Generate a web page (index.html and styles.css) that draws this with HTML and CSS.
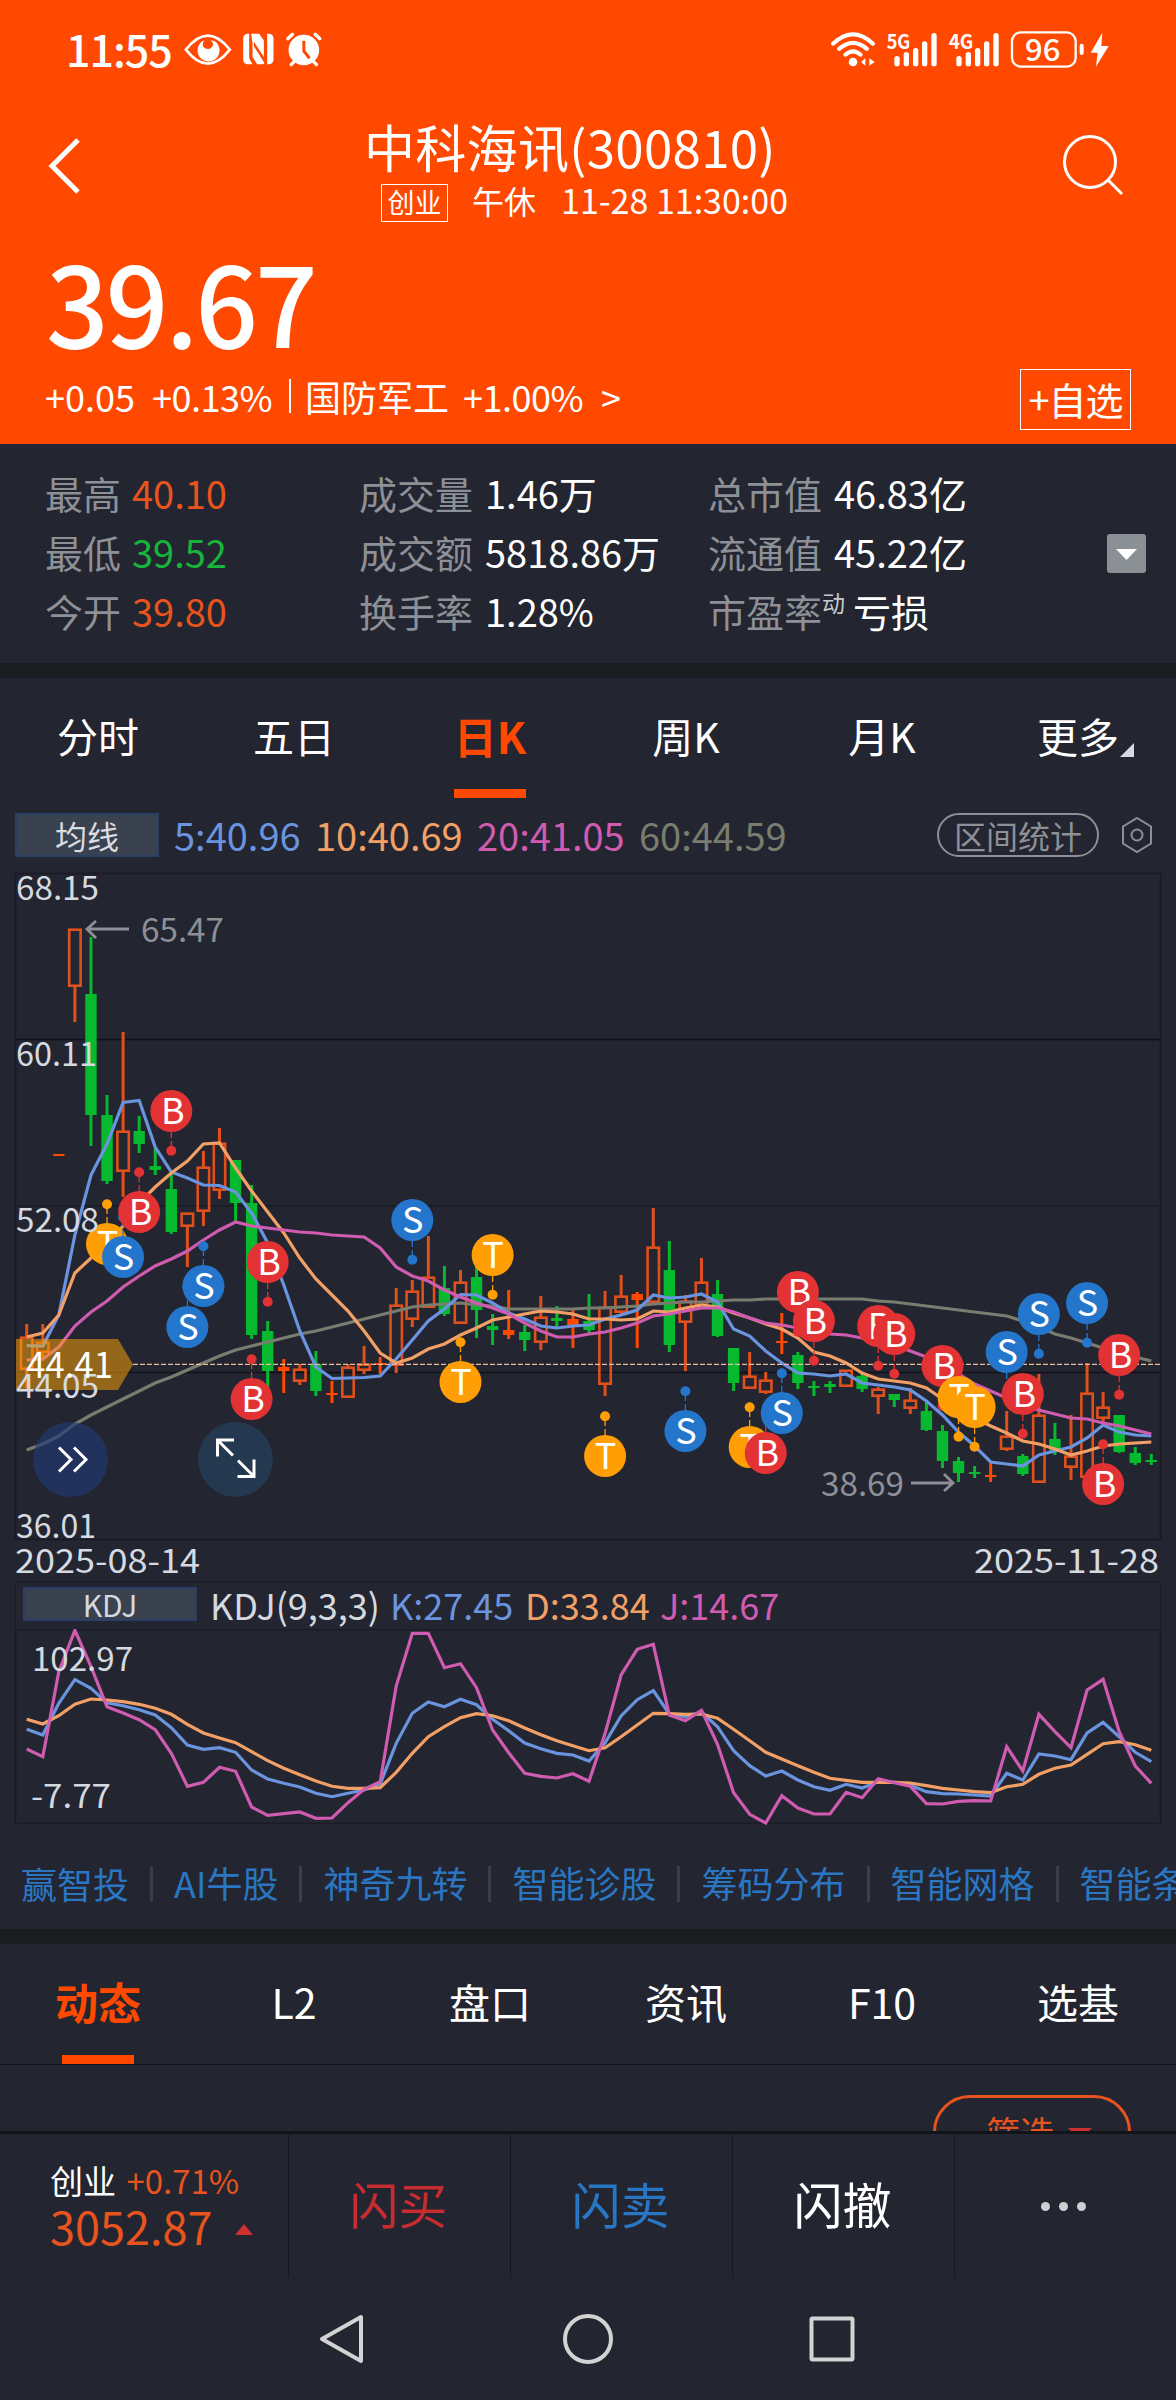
FILE: index.html
```html
<!DOCTYPE html>
<html lang="zh-CN">
<head>
    <meta charset="UTF-8">
    <meta name="viewport" content="width=device-width, initial-scale=1.0">
    <title>中科海讯(300810)</title>
    <link rel="stylesheet" href="styles.css">
</head>
<body>
    <div class="app">
        <header class="header">
            <div class="status-bar">
                <span class="clock">11:55</span>
                <svg class="status-left" viewBox="400 0 440 180">
                    <path d="M408 89 Q474 5 540 89 Q474 173 408 89Z" fill="none" stroke="#fff" stroke-width="8"/>
                    <path d="M465 60 A33 33 0 1 0 505 75 Q499 62 482 61 Q496 72 484 84 Q472 92 460 80 Q456 68 465 60Z" fill="#fff"/>
                    <path d="M594 41h4v74l10 18h-14a14 14 0 0 1-14-14V55a14 14 0 0 1 14-14z" fill="#fff"/>
                    <path d="M604 41h24l14 20v50l-30-46v14l32 50-4 4h-18l-14-22V70zM652 41h5a14 14 0 0 1 14 14v64a14 14 0 0 1-14 14h-5z" fill="#fff"/>
                    <circle cx="762" cy="90" r="46" fill="#fff"/>
                    <path d="M714 56l14-13M810 56l-14-13M724 134l12-12M800 134l-12-12" stroke="#fff" stroke-width="10" stroke-linecap="round"/>
                    <path d="M762 62v31l17 22" fill="none" stroke="#ff4800" stroke-width="9"/>
                </svg>
                <svg class="status-right" viewBox="0 0 900 180">
                    <g fill="none" stroke="#fff" stroke-width="12" stroke-linecap="round">
                        <path d="M39 71Q99 15 159 71M57 87Q99 50 141 87M76 104Q99 84 122 104"/>
                    </g>
                    <circle cx="99" cy="126" r="13" fill="#fff"/>
                    <path d="M136 115v22l-13-11zM148 115v22l16-11z" fill="#fff"/>
                    <text class="net" x="200" y="86" textLength="71" lengthAdjust="spacingAndGlyphs">5G</text>
                    <text class="net" x="386" y="86" textLength="74" lengthAdjust="spacingAndGlyphs">4G</text>
                    <g stroke="#fff" stroke-width="16" stroke-linecap="round">
                        <path d="M231 116v15M259 104v27M287 92v39M314 72v59M342 47v84"/>
                        <path d="M417 116v15M445 104v27M473 92v39M500 72v59M528 47v84"/>
                    </g>
                    <rect x="576" y="37" width="191" height="103" rx="27" fill="none" stroke="#fff" stroke-width="7"/>
                    <text class="battery" x="615" y="122" textLength="106" lengthAdjust="spacingAndGlyphs">96</text>
                    <path d="M785 77v22" stroke="#fff" stroke-width="12" stroke-linecap="round"/>
                    <path d="M847 38l-35 60h21l-5 42 38-62h-22z" fill="#fff"/>
                </svg>
            </div>
            <div class="title-bar">
                <svg class="back" viewBox="0 0 36 60"><path d="M32 4L6 30l26 26" fill="none" stroke="#fff" stroke-width="5"/></svg>
                <div class="title-box">
                    <h1>中科海讯(300810)</h1>
                    <p class="sub"><span class="tag">创业</span><span class="state">午休</span><span>11-28 11:30:00</span></p>
                </div>
                <svg class="search" viewBox="0 0 64 64"><circle cx="29" cy="29" r="25.5" fill="none" stroke="#fff" stroke-width="3"/><path d="M47 47l14 14" stroke="#fff" stroke-width="3"/></svg>
            </div>
            <div class="price">39.67</div>
            <div class="change">
                <span class="c1">+0.05</span><span class="c2">+0.13%</span><span class="bar"></span><span class="c3">国防军工</span><span class="c4">+1.00%</span><span>&gt;</span>
                <button class="add">+自选</button>
            </div>
        </header>

        <section class="stats">
            <dl>
                <div><dt>最高</dt><dd class="up">40.10</dd></div>
                <div><dt>最低</dt><dd class="down">39.52</dd></div>
                <div><dt>今开</dt><dd class="up">39.80</dd></div>
            </dl>
            <dl>
                <div><dt>成交量</dt><dd>1.46万</dd></div>
                <div><dt>成交额</dt><dd>5818.86万</dd></div>
                <div><dt>换手率</dt><dd>1.28%</dd></div>
            </dl>
            <dl>
                <div><dt>总市值</dt><dd>46.83亿</dd></div>
                <div><dt>流通值</dt><dd>45.22亿</dd></div>
                <div><dt>市盈率<sup>动</sup></dt><dd>亏损</dd></div>
            </dl>
            <svg class="expand" viewBox="0 0 39 39"><rect width="39" height="39" rx="3" fill="#8b9094"/><path d="M9 15h21L19.500 26z" fill="#fff"/></svg>
        </section>

        <nav class="tabs">
            <a>分时</a><a>五日</a><a class="active">日K</a><a>周K</a><a>月K</a><a class="more">更多<i></i></a>
        </nav>

        <div class="ma-row">
            <button class="ma-btn">均线</button>
            <span class="k">5:40.96</span><span class="d">10:40.69</span><span class="j">20:41.05</span><span class="m60">60:44.59</span>
            <button class="range">区间统计</button>
            <svg class="hex" viewBox="0 0 34 38"><path d="M17 2l14 8.500v17L17 36 3 27.500v-17z" fill="none" stroke="#8d9096" stroke-width="2"/><circle cx="17" cy="19" r="5.500" fill="none" stroke="#8d9096" stroke-width="2"/></svg>
        </div>

        <svg class="kline" id="kline" viewBox="0 872 1176 709"></svg>

        <div class="kdj-head">
            <button>KDJ</button>
            <span class="name">KDJ(9,3,3)</span><span class="k">K:27.45</span><span class="d">D:33.84</span><span class="j">J:14.67</span>
        </div>
        <svg class="kdj" id="kdj" viewBox="0 1629 1176 196"></svg>

        <div class="links">
            <a>赢智投</a><a>AI牛股</a><a>神奇九转</a><a>智能诊股</a><a>筹码分布</a><a>智能网格</a><a>智能条件</a>
        </div>

        <nav class="tabs info-tabs">
            <a class="active">动态</a><a>L2</a><a>盘口</a><a>资讯</a><a>F10</a><a>选基</a>
        </nav>
        <div class="feed">
            <button class="filter">筛选<i></i></button>
        </div>

        <footer class="trade">
            <div class="index">
                <p class="line1">创业 <span>+0.71%</span></p>
                <p class="line2">3052.87<i></i></p>
            </div>
            <a class="buy">闪买</a>
            <a class="sell">闪卖</a>
            <a>闪撤</a>
            <a class="dots"><i></i><i></i><i></i></a>
        </footer>
        <div class="sys-nav">
            <svg viewBox="0 0 1176 122" fill="none" stroke="#d3d3d3" stroke-width="4" stroke-linejoin="round">
                <path d="M361 39v44L322 61z"/>
                <circle cx="588" cy="61" r="23"/>
                <rect x="811.500" y="40.500" width="41" height="41" rx="1"/>
            </svg>
        </div>
    </div>

    <script>
        const STEP = 16.066;
        const px = i => 26.7 + i * STEP;
        const RED = '#e0501c', GREEN = '#06b92f';

        // [high, body top, body bottom, low, type]
        // u: hollow up, r: solid up, d: down
        const candles = [
            [1324,1337,1369,1388,'u'],[1324,1342,1352,1361,'u'],[1154,1154,1156,1156,'r'],[929,929,986,1022,'u'],
            [937,994,1115,1146,'d'],[1095,1115,1181,1184,'d'],[1032,1131,1171,1197,'u'],[1116,1131,1144,1153,'d'],
            [1148,1166,1170,1175,'d'],[1172,1189,1232,1234,'d'],[1213,1213,1226,1267,'u'],[1151,1167,1211,1226,'u'],
            [1128,1143,1190,1199,'u'],[1160,1160,1203,1221,'d'],[1185,1203,1335,1339,'d'],[1321,1331,1371,1390,'d'],
            [1359,1367,1371,1393,'r'],[1364,1369,1381,1385,'u'],[1351,1364,1391,1396,'d'],[1381,1393,1395,1403,'r'],
            [1364,1367,1397,1398,'u'],[1346,1364,1370,1374,'u'],[1357,1363,1365,1374,'r'],[1288,1305,1365,1373,'u'],
            [1280,1291,1319,1327,'u'],[1236,1277,1307,1308,'u'],[1266,1288,1314,1316,'d'],[1270,1282,1323,1323,'u'],
            [1265,1277,1310,1338,'d'],[1314,1326,1330,1345,'d'],[1290,1330,1335,1339,'r'],[1325,1332,1340,1351,'d'],
            [1296,1317,1342,1350,'u'],[1306,1318,1321,1327,'d'],[1310,1319,1325,1348,'r'],[1294,1321,1330,1333,'d'],
            [1291,1307,1384,1396,'u'],[1275,1296,1312,1315,'u'],[1292,1294,1300,1348,'r'],[1208,1247,1302,1302,'u'],
            [1241,1270,1345,1352,'d'],[1295,1301,1322,1371,'u'],[1258,1282,1305,1305,'u'],[1280,1294,1336,1337,'d'],
            [1348,1348,1383,1391,'d'],[1352,1376,1388,1389,'u'],[1372,1380,1392,1394,'u'],[1313,1341,1343,1354,'r'],
            [1352,1355,1383,1389,'d'],[1381,1386,1388,1396,'d'],[1381,1384,1387,1393,'d'],[1370,1370,1386,1386,'u'],
            [1373,1376,1389,1392,'d'],[1387,1389,1396,1414,'u'],[1394,1394,1400,1407,'d'],[1388,1400,1408,1414,'u'],
            [1402,1411,1430,1431,'d'],[1425,1431,1461,1468,'d'],[1457,1461,1473,1482,'d'],[1466,1472,1474,1478,'d'],
            [1463,1475,1477,1482,'r'],[1411,1436,1449,1451,'u'],[1454,1456,1474,1476,'d'],[1374,1415,1482,1482,'u'],
            [1423,1439,1451,1455,'d'],[1415,1456,1467,1480,'u'],[1363,1393,1477,1477,'u'],[1392,1407,1418,1423,'u'],
            [1415,1415,1452,1453,'d'],[1447,1453,1463,1465,'d'],[1454,1460,1462,1465,'d']
        ];

        const ma60 = [1450,1444,1436,1424,1415,1407,1399,1391,1383,1377,1370,1363,1356,1350,1346,1342,1338,1334,1331,1327,1323,1319,1315,1311,1307,1305,1304,1303,1305,1306,1309,1309,1309,1309,1309,1308,1308,1307,1306,1304,1303,1302,1302,1301,1300,1300,1299,1299,1299,1299,1299,1299,1299,1301,1302,1304,1306,1308,1310,1312,1314,1316,1321,1327,1334,1338,1343,1348,1352,1357,1361];
        const ma5 = [1345.5,1346,1315,1235,1175,1144,1102.5,1100.5,1147,1172,1178,1185,1185.5,1192,1213,1243,1285,1331,1367,1378.5,1378,1377.5,1376,1359,1340,1321,1309,1294.5,1295,1303,1313,1319,1326,1328,1326,1325,1319,1315,1310,1295,1298,1297,1294,1302,1329,1336,1351,1363,1373,1374,1376,1374,1383,1385,1387,1390,1401,1415,1432,1446,1462,1464,1466,1455,1451,1447,1438,1425,1432,1435,1436];
        const ma10 = [1337,1333,1315,1273,1258,1243,1226,1203,1187,1173,1161,1144,1143,1168,1191,1212,1233,1258,1279,1295,1311,1331,1353,1363,1358,1349,1344,1335,1328,1320,1317,1314,1311,1312,1314,1319,1319,1320,1319,1311,1312,1308,1305,1307,1313,1318,1324,1329,1338,1352,1356,1363,1373,1379,1381,1383,1388,1399,1410,1418,1426,1433,1441,1444,1449,1455,1451,1446,1444,1443,1442];
        const ma20 = [1360,1359,1347,1326,1312,1301,1287,1276,1266,1259,1251,1240,1230,1222,1226,1228,1230,1232,1233,1235,1236,1237,1248,1267,1276,1281,1290,1297,1303,1308,1314,1323,1331,1337,1337,1334,1332,1328,1323,1316,1314,1311,1308,1308,1312,1318,1323,1325,1328,1332,1334,1335,1338,1341,1345,1351,1357,1367,1374,1384,1391,1398,1405,1410,1414,1418,1419,1423,1426,1430,1434];

        // [day, letter, y, side of the dot]
        const marks = [
            [5,'T',1244,-1],[6,'S',1257,-1],[7,'B',1212,-1],[9,'B',1111,1],[10,'S',1327,-1],[11,'S',1286,-1],
            [14,'B',1399,-1],[15,'B',1262,1],[24,'S',1220,1],[27,'T',1382,-1],[29,'T',1255,1],[36,'T',1456,-1],
            [41,'S',1431,-1],[45,'T',1447,-1],[46,'B',1453,-1],[47,'S',1413,-1],[48,'B',1292,1],[49,'B',1321,1],
            [53,'B',1326,1],[54,'B',1334,1],[57,'B',1366,1],[58,'T',1397,1],[59,'T',1407,1],[61,'S',1352,1],
            [62,'B',1394,1],[63,'S',1314,1],[66,'S',1303,1],[67,'B',1484,-1],[68,'B',1355,1]
        ];
        const markColor = { B: '#e33234', S: '#2376cc', T: '#ff9f05' };

        // oscillator values, in thirds of a pixel from y 1560
        const kdjD = [478,492,467,433,417,420,425,433,445,463,493,519,534,548,575,602,625,644,663,679,685,685,683,637,580,530,500,473,461,467,482,504,524,542,557,572,563,530,495,460,461,463,462,475,508,542,577,597,617,637,655,661,667,667,667,669,677,685,690,695,698,680,673,643,625,615,583,551,545,554,571];
        const kdjK = [508,525,430,359,385,428,437,449,465,503,555,568,563,577,630,657,670,681,700,710,700,690,672,550,460,426,440,418,434,478,512,549,566,580,585,603,548,468,419,392,462,470,456,500,572,617,648,633,660,680,691,673,684,665,667,676,695,701,702,705,708,640,660,582,588,599,519,487,530,577,605];
        const kdjJ = [567,590,335,211,320,440,459,479,509,580,679,667,622,634,741,766,761,756,775,774,728,688,665,378,220,220,323,311,383,510,578,640,649,654,641,664,520,345,268,253,465,482,451,553,698,763,789,707,744,762,762,697,713,656,668,679,731,732,724,722,723,560,633,463,515,563,390,358,515,618,670];

        function line(values, cls) {
            const pts = values.map((v, i) => `${px(i).toFixed(1)},${v.toFixed(1)}`).join(' ');
            return `<polyline class="ma ${cls}" points="${pts}"/>`;
        }

        function text(x, y, w, s, cls) {
            return `<text class="${cls}" x="${x}" y="${y}" textLength="${w}" lengthAdjust="spacingAndGlyphs">${s}</text>`;
        }

        function candle(c, i) {
            const [hi, top, bot, lo, type] = c;
            const x = px(i), color = type === 'd' ? GREEN : type === 'r' ? '#ff4800' : RED;
            // crosses have a wide thin body and a wick on both sides
            let s = '';
            if (hi < top) s += `<path d="M${x} ${hi}V${top}" stroke="${color}" stroke-width="3"/>`;
            if (lo > bot) s += `<path d="M${x} ${bot}V${lo}" stroke="${color}" stroke-width="3"/>`;
            if (type === 'u') {
                s += `<rect x="${x - 5.7}" y="${top + 0.7}" width="11.4" height="${bot - top - 1}" fill="none" stroke="${color}" stroke-width="2.6"/>`;
            } else {
                s += `<rect x="${x - 5.7}" y="${top}" width="11.4" height="${bot - top}" fill="${color}"/>`;
            }
            return s;
        }

        function mark([i, letter, y, side]) {
            const x = px(i), c = markColor[letter], dot = y + side * 39.7;
            return `<path d="M${x} ${y}V${dot}" stroke="${c}" stroke-width="1.3" stroke-dasharray="7 3"/>
                <circle cx="${x}" cy="${dot}" r="5" fill="${c}"/>
                <circle cx="${x}" cy="${y}" r="21" fill="${c}"/>
                <text class="mark" x="${x + (letter === 'B' ? 1.5 : 0.5)}" y="${y + 13}">${letter}</text>`;
        }

        document.getElementById('kline').innerHTML = `
            <path class="grid" d="M15.500 873.500H1160.500V1539.500H15.500zM15 1206H1160"/>
            <path class="grid dark" d="M15 1039.500H1160M15 1372.500H1160"/>
            ${candles.map(candle).join('')}
            ${line(ma60, 'c60')}${line(ma5, 'ck')}${line(ma10, 'cd')}${line(ma20, 'cj')}
            <path d="M133 1364.400H1160" stroke="#e8bd9c" stroke-width="1.400" stroke-dasharray="5 2"/>
            ${marks.map(mark).join('')}
            <path d="M16 1339H118L133 1364.500L118 1390H16z" fill="#ffa508" opacity=".52"/>
            ${text(16, 900, 83, '68.15', 'axis')}${text(16, 1066, 81, '60.11', 'axis')}
            ${text(16, 1232, 83, '52.08', 'axis')}${text(16, 1398, 83, '44.05', 'axis')}
            ${text(16, 1538, 80, '36.01', 'axis')}
            ${text(26, 1378, 87, '44.41', 'tag-text')}
            ${text(141, 942, 83, '65.47', 'peak')}
            <path class="arrow" d="M129 929H87M96 921L87 929L96 938"/>
            ${text(821, 1496, 83, '38.69', 'peak')}
            <path class="arrow" d="M911 1483H953M944 1474L953 1483L944 1491"/>
            <circle cx="70.500" cy="1459.500" r="37.500" fill="#213a76" opacity=".65"/>
            <path class="icon" d="M59 1447.500L71 1459.500L59 1471.500M74 1447.500L86 1459.500L74 1471.500"/>
            <circle cx="235.500" cy="1459.500" r="37.500" fill="#243850"/>
            <path class="icon" d="M234 1440H217.500V1456.500M217.500 1440L233 1455.500M237.500 1476.500H254V1459.500M254 1476.500L238 1460.500"/>
            ${text(15, 1573, 185, '2025-08-14', 'axis')}${text(974, 1573, 185, '2025-11-28', 'axis')}
        `;

        const third = v => 1560 + v / 3;
        document.getElementById('kdj').innerHTML = `
            <path class="grid" d="M15.500 1629.500H1160.500V1823.500H15.500z"/>
            ${line(kdjK.map(third), 'ck')}${line(kdjD.map(third), 'cd')}${line(kdjJ.map(third), 'cj')}
            ${text(32, 1671, 101, '102.97', 'axis')}${text(31, 1808, 80, '-7.77', 'axis')}
        `;
    </script>
</body>
</html>
```
FILE: styles.css
```css
:root {
    --bg: #232530;
    --orange: #ff4800;
    --blue: #6a94df;
    --peach: #f2a066;
    --pink: #cf5cb0;
    --olive: #797c6e;
    --grey: #8d9096;
    --border: #191b25;
}

* {
    margin: 0;
    padding: 0;
    box-sizing: border-box;
}

body {
    background: var(--bg);
    color: #fff;
    font-family: "Noto Sans CJK SC", "Noto Sans", sans-serif;
}

button {
    font-family: inherit;
    color: inherit;
    background: none;
    border: none;
}

svg {
    display: block;
}

.app {
    width: 1176px;
    height: 2400px;
    overflow: hidden;
}

/* Header */
.header {
    height: 444px;
    background: var(--orange);
}

.status-bar {
    display: flex;
    height: 100px;
    padding: 20px 56px 0 66px;
}

.clock {
    width: 117px;
    font-size: 43px;
    line-height: 56px;
    letter-spacing: -1px;
    font-weight: 500;
}

.status-left {
    width: 147px;
    height: 60px;
}

.status-right {
    width: 300px;
    height: 60px;
    margin-left: auto;
}

.net {
    font-size: 60px;
    font-weight: 700;
    fill: #fff;
}

.battery {
    font-size: 89px;
    font-weight: 500;
    fill: #fff;
}

.title-bar {
    display: flex;
    height: 140px;
    padding: 17px 52px 0 46px;
}

.back {
    width: 36px;
    height: 60px;
    margin-top: 19px;
}

.title-box {
    flex: 1;
}

.title-box h1 {
    margin-left: 282px;
    font-size: 51px;
    font-weight: 400;
    line-height: 58px;
    letter-spacing: 0.3px;
    white-space: nowrap;
}

.sub {
    display: flex;
    align-items: center;
    margin-left: 299px;
    height: 50px;
    font-size: 34px;
    line-height: 50px;
    white-space: nowrap;
}

.tag {
    width: 67px;
    height: 38px;
    margin-top: 6px;
    border: 1.5px solid #fff;
    font-size: 27px;
    line-height: 33px;
    text-align: center;
}

.state {
    margin: 0 25px 0 24px;
    font-size: 32px;
}

.search {
    width: 64px;
    height: 64px;
    margin: 16px -1px 0 1px;
}

.price {
    height: 130px;
    padding-left: 46px;
    font-size: 110px;
    font-weight: 500;
    line-height: 120px;
    letter-spacing: -3px;
}

.change {
    display: flex;
    align-items: center;
    height: 60px;
    padding: 0 45px;
    font-size: 36px;
    margin-top: -1px;
    white-space: nowrap;
}

.change span {
    line-height: 50px;
    margin-top: -6px;
}

.c1 { width: 107px; }
.c2 { width: 137px; letter-spacing: -0.5px; }
.c3 { width: 158px; }
.c4 { width: 138px; letter-spacing: -0.5px; }

.bar {
    width: 2px;
    height: 34px;
    margin-right: 14px;
    background: #fff;
}

.add {
    width: 111px;
    height: 61px;
    margin-left: auto;
    border: 1.5px solid #fff;
    font-size: 38px;
    line-height: 50px;
    letter-spacing: -1px;
}

/* Quote figures */
.stats {
    display: grid;
    grid-template-columns: 314px 349px 398px 39px;
    align-items: center;
    height: 234px;
    padding: 0 30px 15px 46px;
    border-bottom: 15px solid #1b1c1f;
    font-size: 38px;
}

.stats dl div {
    display: flex;
    height: 59px;
    line-height: 54px;
    white-space: nowrap;
}

.stats dl {
    padding-top: 17px;
    margin-left: -1px;
}

.stats dt {
    margin-right: 11px;
    color: var(--grey);
}

.stats dl + dl dt {
    margin-right: 12px;
}

.stats sup {
    margin-right: -4px;
    font-size: 23px;
    line-height: 0;
    color: #c8cbd0;
    vertical-align: 15px;
}

.stats dd.up {
    color: #e8541e;
}

.stats dd.down {
    color: #16b53c;
}

.expand {
    width: 39px;
    height: 39px;
    margin-top: 14px;
}

/* Tabs */
.tabs {
    display: grid;
    grid-template-columns: repeat(6, 196px);
    height: 120px;
    font-size: 41px;
    line-height: 114px;
    text-align: center;
}

.tabs a {
    position: relative;
}

.tabs .active {
    color: var(--orange);
    font-size: 43px;
    font-weight: 700;
}

.tabs .active::after {
    content: "";
    position: absolute;
    left: 62px;
    bottom: 0;
    width: 72px;
    height: 9px;
    background: var(--orange);
}

.more i {
    position: absolute;
    left: 140px;
    top: 65px;
    border: 7.5px solid transparent;
    border-right-color: #d5d9e0;
    border-bottom-color: #d5d9e0;
}

/* Moving averages */
.ma-row {
    display: flex;
    align-items: center;
    height: 74px;
    padding: 0 22px 0 15px;
    font-size: 38px;
}

.ma-row span {
    width: 162px;
    line-height: 70px;
}

.ma-row .k {
    width: 141px;
}

.ma-btn {
    width: 144px;
    height: 44px;
    margin-right: 15px;
    background: #3a424f;
    border: 2px solid #2b3e66;
    font-size: 32px;
    line-height: 36px;
    color: #d9dce2;
}

.range {
    width: 162px;
    height: 44px;
    margin-left: auto;
    border: 2px solid var(--grey);
    border-radius: 22px;
    font-size: 32px;
    line-height: 36px;
    color: var(--grey);
}

.hex {
    width: 34px;
    height: 38px;
    margin-left: 21px;
}

.k { color: var(--blue); }
.d { color: var(--peach); }
.j { color: var(--pink); }
.m60 { color: var(--olive); }

/* Charts */
.kline {
    width: 1176px;
    height: 709px;
}

.kdj {
    width: 1176px;
    height: 196px;
}

.grid {
    fill: none;
    stroke: var(--border);
    stroke-width: 1.5;
}

.grid.dark {
    stroke: #101218;
}

.ma {
    fill: none;
    stroke-width: 3.2;
}

.ck { stroke: var(--blue); }
.cd { stroke: var(--peach); }
.cj { stroke: var(--pink); }
.c60 { stroke: var(--olive); }

.axis {
    font-size: 33px;
    fill: #d5d9e0;
}

.tag-text {
    font-size: 35px;
    fill: #fff;
}

.peak {
    font-size: 33px;
    fill: var(--grey);
}

.arrow {
    fill: none;
    stroke: var(--grey);
    stroke-width: 2.8;
}

.icon {
    fill: none;
    stroke: #fff;
    stroke-width: 3;
}

.mark {
    font-size: 36px;
    fill: #fff;
    text-anchor: middle;
}

.kdj-head {
    display: flex;
    align-items: center;
    height: 48px;
    margin: 0 15px;
    padding: 0 0 3px 7px;
    border: 1.5px solid var(--border);
    border-bottom: none;
    font-size: 36px;
    line-height: 42px;
}

.kdj-head button {
    width: 174px;
    height: 34px;
    margin-right: 13px;
    background: #3a424f;
    border: 2px solid #2b3e66;
    font-size: 30px;
    line-height: 28px;
    color: #d5d9e0;
}

.kdj-head span {
    width: 136px;
    margin-left: -1px;
}

.kdj-head .name {
    width: 181px;
    margin-left: 0;
    color: #d5d9e0;
}

/* Tool links */
.links {
    display: flex;
    align-items: center;
    height: 119px;
    padding: 0 0 0 21px;
    border-bottom: 15px solid #1b1c1f;
    overflow: hidden;
    font-size: 36px;
    line-height: 36px;
    color: #2a76c2;
    white-space: nowrap;
}

.links a {
    flex: none;
    padding-top: 11px;
}

.links a + a::before {
    content: "";
    display: inline-block;
    width: 3px;
    height: 36px;
    margin: 0 21px;
    background: #3a3e4a;
    vertical-align: -4px;
}

/* Feed */
.info-tabs {
    height: 121px;
    border-bottom: 1px solid #12141a;
}

.feed {
    display: flex;
    justify-content: flex-end;
    height: 66px;
    padding: 30px 45px 0 0;
    overflow: hidden;
}

.filter {
    flex: none;
    width: 198px;
    height: 74px;
    padding-left: 14px;
    border: 3px solid #e8541e;
    border-radius: 37px;
    font-size: 34px;
    line-height: 60px;
    color: #e8541e;
}

.filter i {
    display: inline-block;
    margin-left: 14px;
    border: 12px solid transparent;
    border-top-color: #c9302f;
    border-bottom: none;
    vertical-align: 6px;
}

/* Bottom bar */
.trade {
    display: grid;
    grid-template-columns: 288px 222px 222px 222px 222px;
    height: 147px;
    border-top: 3px solid #12141a;
}

.trade a {
    padding-right: 2px;
    border-left: 1px solid #15171e;
    font-size: 49px;
    line-height: 138px;
    text-align: center;
}

.index {
    padding: 24px 0 0 50px;
    white-space: nowrap;
}

.line1 {
    font-size: 33px;
    line-height: 44px;
}

.line1 span {
    margin-left: 3px;
    color: #e8541e;
}

.line2 {
    font-size: 45px;
    line-height: 48px;
    color: #e8541e;
}

.line2 i {
    display: inline-block;
    margin-left: 23px;
    border: 9px solid transparent;
    border-bottom: 11px solid #d03030;
    border-top: none;
    vertical-align: 10px;
}

.trade .buy {
    color: #c62c30;
}

.trade .sell {
    color: #2876c4;
}

.trade .dots {
    display: flex;
    gap: 9px;
    align-items: center;
    justify-content: center;
    padding-right: 4px;
}

.dots i {
    width: 9px;
    height: 9px;
    border-radius: 50%;
    background: #cfd0d2;
}

.sys-nav svg {
    width: 1176px;
    height: 122px;
}
```
